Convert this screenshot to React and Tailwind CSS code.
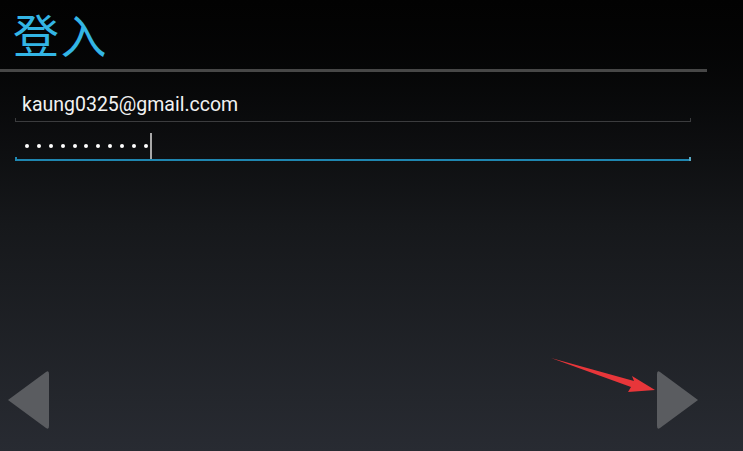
import React from "react";

export default function App() {
  return (
    <div className="relative flex h-[451px] w-[743px] flex-col overflow-hidden bg-gradient-to-b from-[#020202] via-[#16181b] to-[#282b32] font-['Roboto','Noto_Sans_CJK_SC',sans-serif]">
      {/* Title */}
      <div className="flex h-[69px] items-start pl-[13px]">
        <h1 className="font-['Noto_Sans_CJK_SC',sans-serif] text-[46px] leading-[67px] font-normal tracking-[1.5px] text-[#33b5e5]">
          登入
        </h1>
      </div>
      <div className="h-[3px] w-[707px] bg-[#474747]" />

      {/* Fields */}
      <div className="flex w-[691px] flex-col pl-[15px] pt-[16px]">
        <div className="relative flex h-[34px] items-start">
          <span className="pl-[7px] pt-[6px] text-[19.5px] leading-[22px] text-[#f2f2f2]">kaung0325@gmail.ccom</span>
          <div className="absolute bottom-0 left-0 h-px w-full bg-[#3b3c3e]" />
          <div className="absolute bottom-0 left-0 h-[4px] w-px bg-[#3b3c3e]" />
          <div className="absolute bottom-0 right-0 h-[4px] w-px bg-[#3b3c3e]" />
        </div>
        <div className="relative flex h-[39px] items-center">
          <div className="ml-[10px] mt-[9px] flex items-center gap-[7.9px]">
            {Array.from({ length: 11 }).map((_, i) => (
              <span key={i} className="block h-[4px] w-[4px] rounded-full bg-white" />
            ))}
          </div>
          <div className="ml-[2px] mt-[9px] h-[27px] w-[2px] bg-[#a8a8a8]" />
          <div className="absolute bottom-0 left-0 h-[2px] w-full bg-[#1f86b0]" />
          <div className="absolute bottom-0 left-0 h-[4px] w-[2px] bg-[#1f86b0]" />
          <div className="absolute bottom-0 right-0 h-[4px] w-[2px] bg-[#5aa8c4]" />
        </div>
      </div>

      <div className="flex-1" />

      {/* Nav arrows */}
      <div className="flex items-center justify-between pb-[21px] pl-[6px] pr-[43px]">
        <svg width="44" height="60" viewBox="0 0 44 60">
          <path d="M2 30 L40 2 Q43 0 43 4 L43 56 Q43 60 40 58 Z" fill="#5a5c60" />
        </svg>
        <svg width="44" height="60" viewBox="0 0 44 60">
          <path d="M42 30 L4 2 Q1 0 1 4 L1 56 Q1 60 4 58 Z" fill="#5a5c60" />
        </svg>
      </div>

      {/* Red annotation arrow */}
      <svg className="absolute left-0 top-0" width="743" height="451" viewBox="0 0 743 451">
        <path d="M551 358 L634 381 L632 376 L655 390 L628 392 L631 387 Z" fill="#e8363a" />
      </svg>
    </div>
  );
}
